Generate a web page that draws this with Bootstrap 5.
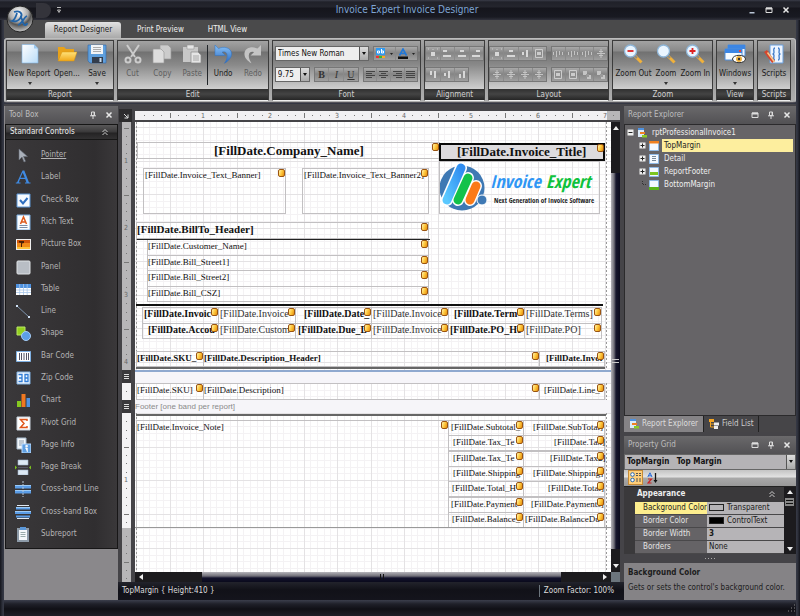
<!DOCTYPE html>
<html lang="en">
<head>
<meta charset="utf-8">
<meta name="viewport" content="width=device-width, initial-scale=1">
<title>Invoice Expert Invoice Designer</title>
<link href="https://cdn.jsdelivr.net/npm/bootstrap@5.3.0/dist/css/bootstrap.min.css" rel="stylesheet">
<style>
body{font-family:"DejaVu Sans Condensed","DejaVu Sans",sans-serif;font-size:8px;line-height:12px;background:#15151c;color:#ddd}
button,select,input{font:inherit;color:inherit}
button{border:0;background:none;padding:0}
svg{display:block;flex:none}
.i20{width:20px;height:20px}.i14{width:14px;height:14px}.i10{width:10px;height:10px}
.win{min-height:100vh;padding:0 4px;background:linear-gradient(90deg,#14151c,#343743 3px,#343743 calc(100% - 3px),#14151c)}
/* title bar */
.titlebar{height:20px;margin:0 -4px;padding:0 6px 0 36px;background:linear-gradient(#3a3c48 0,#202129 2px,#24252d 7px,#15151c 8px,#191a22 17px,#30313b)}
.titlebar h1{font-size:10px;line-height:20px;color:#7fa6d4;margin:0}
.orb{left:6px;top:5px;z-index:3}
.qat{width:15px;height:15px;border-radius:0 8px 8px 0;background:#34343b}
.wbtn{width:17px;height:16px}
/* ribbon */
.tabrow{height:18px;background:#4a4a4b;padding-left:41px;gap:16px}
.rtab{height:16px;color:#eee;line-height:16px}
.rtab.active{background:linear-gradient(#e2e2e2,#a9a9a9);color:#222;border-radius:3px 3px 0 0;width:76px}
.ribbon{height:65px;background:linear-gradient(#a5a5a5,#8a8a8a 20px,#b0b0b0);border:1px solid #bdbdbd;border-bottom-color:#55535a;border-radius:3px;padding:1px 4px 1px 1px;gap:3px}
.grp{border:1px solid #3c3c3c;border-bottom:1px solid #eee;min-width:0;color:#1b1b1b;background:linear-gradient(#a3a3a3,#898989 10px,#717171 11px,#8a8a8a 24px,#cfcfcf 48px)}
.gcap{height:11px;line-height:11px;color:#d0d0d0;text-align:center;background:linear-gradient(#303030,#444 5px,#262626)}
.g-report{flex:109 1 0}.g-edit{flex:155 1 0}.g-font{flex:152 1 0}.g-align{flex:61 1 0}.g-layout{flex:123 1 0}.g-zoom{flex:102 1 0}.g-view{flex:37 1 0}.g-script{flex:33 1 0}
.big{display:flex;flex-direction:column;align-items:center;white-space:nowrap;padding-top:3px}
.big span{line-height:13px;margin-top:3px}
.big .dd{width:4px;height:3px;margin-top:2px}
.dis{color:#5e5e5e}
.tools{padding:5px 2px 0 2px;gap:6px;display:flex;flex-direction:column}
.bset{display:flex;height:15px;border:1px solid #777;background:linear-gradient(#aaa,#858585 6px,#9f9f9f)}
.bset button{flex:1 1 0;display:flex;align-items:center;justify-content:center;border-left:1px solid #8a8a8a;min-width:0}
.bset button:first-child{border-left:0}
.w-color{width:45px}.w-biu{width:45px}.w-size{width:35px}
.combo{position:relative;height:15px;background:#eee;border:1px solid #666;color:#111}
.combo select{appearance:none;border:0;background:none;width:100%;height:13px;padding:0 2px;line-height:13px;outline:0;display:block}
.combo::before{content:"";position:absolute;right:0;top:0;bottom:0;width:9px;background:linear-gradient(#ddd,#aaa);border-left:1px solid #555}
.combo::after{content:"";position:absolute;right:2px;top:5px;border:2px solid transparent;border-top:3px solid #111}
.ftxt{font-family:"Liberation Serif",serif;font-size:10px;color:#333}
/* work area */
.work{background:#454448;padding:2px 0 0;margin-top:1px;min-height:0}
.minw{min-width:0}
.dhead{height:18px;padding:0 5px 0 4px;color:#bdbdbd;background:linear-gradient(#6a696b,#525154)}
.toolbox{width:114px;flex:none;background:#8a888b;padding-left:1px}
.tbcat{height:16px;padding:0 8px 0 4px;color:#eee;border:1px solid #161616;background:linear-gradient(#585758,#3a393a 7px,#242324 8px,#323132)}
.tblist{background:linear-gradient(90deg,#3a383a,#302e30 80%,#3a383a);border:1px solid #171617;border-top:0;padding:4px 0 3px 9px}
.tblist button{display:flex;align-items:center;flex:1 1 0;gap:10px;color:#b4b3b4;text-align:left}
.tblist svg{width:16px;height:16px}
.tbfoot{height:51px}
/* design surface */
.rulerrow{padding:0 4px 0 1px;margin-top:3px;gap:3px}
.corner{width:13px;height:13px;background:#2d2c2e}
.hruler{height:9px;background:#f1f0f2}
.hruler svg{width:100%;height:100%}
.vruler{width:9px;flex:none;background:#3a393c}
.vseg{position:relative;background:#f4f3f5;overflow:hidden}.vseg.grey{background:#b7b6b8}
.vgap{display:flex;align-items:center;justify-content:center}
.paper{color:#111;background:#fff;min-width:0}
.h-top{height:248px}.h-cap1{height:13px}.h-det{height:17px}.h-cap2{height:13px}.h-foot{height:115px}
.band{position:relative;background:#fff;overflow:hidden}
.band>svg,.vseg>svg{position:absolute;left:0;top:0;width:100%;height:100%}
.bcap{background:#f6f5f9;color:#8a8a8a;font-family:"Liberation Sans",sans-serif;line-height:13px}
.bcap.sel{border-top:2px solid #8fa9cf}
.fld{position:absolute;border:1px solid #c2c0c2;font:9px/12px "Liberation Serif",serif;white-space:nowrap}
.fld.b9{font-weight:700}
.fld.n10{font-size:10px;color:#333}
.fld.b10{font-size:10px;font-weight:700}
.fld.b11{font-size:11px;font-weight:700}
.fld.h13{font-size:13px;line-height:15px;font-weight:700}
.fld.ttl{border:2px solid #0a0a0a;background:#dddbde;line-height:14px}
.rule{position:absolute}
.db{position:absolute;width:7px;height:8px;border:1px solid #9b5410;border-radius:2px;background:linear-gradient(110deg,#fff3b0,#ffc83c 50%,#e38a10)}
.vscroll{width:9px;flex:none;background:#1c1b1e}
.vscroll .v1{height:39px}.vscroll .thumb{background:linear-gradient(90deg,#b5b4ba,#706f78 3px,#16162c 5px,#0a0a1c)}
.hscroll{height:10px;flex:none;background:#1c1b1e}
.hscroll .s1{width:55px}
.hscroll .thumb{background:linear-gradient(#b5b4ba,#706f78 4px,#12122c 6px,#0a0a1c)}
.vscroll .s2{height:11px}.hscroll .s2{width:38px}
.status{height:18px;background:linear-gradient(#22232c,#111118 8px,#14141c);color:#ddd;padding:0 10px 0 4px}
.botframe{height:16px;background:linear-gradient(#3b3e4c 0,#1f2029 4px,#101016 9px,#1d1e27)}
/* right side */
.rside{width:172px;flex:none;background:#454448}
.tree{background:#666467;border:1px solid #2b2a2c;padding:1px 2px;color:#eee;line-height:13px}
.tree ul{list-style:none;margin:0;padding:0 0 0 12px}
.tree .node{display:flex;align-items:center;height:13px;gap:3px}
.tree .node.on b{background:#fdee9e;color:#222}
.tree .node b{font-weight:400;flex:1;padding-left:2px}
.dtab{height:16px;padding:0 5px;display:flex;align-items:center;gap:3px;border-right:1px solid #222;color:#ccc}
.dtab.active{background:#858386;color:#ddd}
.dtabs{background:#464548}
.objsel{height:16px;background:#b5b3b6;font-weight:700}
.objsel select{font-weight:700}
.pbar{height:16px;background:linear-gradient(#c4c4c4,#e2e2e2 7px,#a9a9a9 8px,#989898)}
.pbar .on{background:#ffcf7a;border:1px solid #c58a36;height:15px;width:15px;justify-content:center}
.pgrid{background:#3a393b;border-top:1px solid #222}
.pgrid table{width:100%;table-layout:fixed;border-collapse:collapse}
.pgrid th,.pgrid td{height:13px;padding:0 2px;line-height:12px;border-bottom:1px solid #49484a;white-space:nowrap;overflow:hidden;font-weight:400}
.pgrid th{background:#656366;color:#e4e4e4;padding-left:8px;padding-right:0;width:72px}
.pgrid tr.on th{background:#fdee8e;color:#222}
.pgrid td{background:#b6b4b7;color:#1a1a1a}
.pgrid td i{display:inline-block;width:15px;height:7px;border:1px solid #222;margin-right:3px;vertical-align:-1px}
.pcat{height:15px;font-weight:700;color:#eee;padding:0 8px 0 2px}
.pleft{width:11px;flex:none}
.pscroll{width:12px;flex:none;background:#1c1b1e;padding:3px 0}
.pdesc{background:#858386;color:#1c1c1c;height:37px;padding:4px 4px}
.pdesc h2{font-size:8px;line-height:12px;font-weight:700;margin:0 0 3px}
</style>
<script src="https://cdn.jsdelivr.net/npm/bootstrap@5.3.0/dist/js/bootstrap.bundle.min.js"></script>
</head>
<body>
<svg width="0" height="0" class="position-absolute" aria-hidden="true">
<defs>
<linearGradient id="gPage" x1="0" y1="0" x2="1" y2="1"><stop offset="0" stop-color="#fff"/><stop offset="1" stop-color="#b9dcf8"/></linearGradient>
<linearGradient id="gBlue" x1="0" y1="0" x2="0" y2="1"><stop offset="0" stop-color="#8cc4f7"/><stop offset="1" stop-color="#2767c0"/></linearGradient>
<linearGradient id="gGold" x1="0" y1="0" x2="0" y2="1"><stop offset="0" stop-color="#ffe27a"/><stop offset="1" stop-color="#f0a81a"/></linearGradient>
<radialGradient id="gOrb" cx=".45" cy=".25" r=".8"><stop offset="0" stop-color="#fff"/><stop offset=".45" stop-color="#aaa"/><stop offset=".6" stop-color="#555"/><stop offset="1" stop-color="#ddd"/></radialGradient>
<linearGradient id="gSky" x1="1" y1="0" x2="0" y2="1"><stop offset="0" stop-color="#2f8cf0"/><stop offset="1" stop-color="#5ac8ff"/></linearGradient>
</defs>
<symbol id="pin" viewBox="0 0 8 8"><path d="M2.500 1h3v3.500h-3zM1 4.800h6M4 5v3" fill="none" stroke="#ddd"/><path d="M4.600 1h1v3.500h-1z" fill="#ddd"/></symbol>
<symbol id="xx" viewBox="0 0 8 8"><path d="M1.500 1.500l5 5M6.500 1.500l-5 5" stroke="#e8e8e8" stroke-width="1.500"/></symbol>
<symbol id="maxi" viewBox="0 0 8 8"><path d="M1 2h6v4.500H1z" fill="none" stroke="#ddd"/><path d="M1 1.500h6v2H1z" fill="#ddd"/></symbol>
<symbol id="mini" viewBox="0 0 8 8"><path d="M1.500 6h5v1.500h-5z" fill="#b9c4d4"/></symbol>
<symbol id="chev" viewBox="0 0 8 8"><path d="M1.500 4L4 1.500 6.500 4M1.500 7L4 4.500 6.500 7" fill="none" stroke="#ccc"/></symbol>
<symbol id="dd" viewBox="0 0 4 3"><path d="M0 0h4L2 3z" fill="#333"/></symbol>
<symbol id="plus" viewBox="0 0 7 7"><path d="M.5.5h6v6h-6z" fill="#eee"/><path d="M1.500 3.500h4M3.500 1.500v4" stroke="#222"/></symbol>
<symbol id="minus" viewBox="0 0 7 7"><path d="M.5.5h6v6h-6z" fill="#eee"/><path d="M1.500 3.500h4" stroke="#222"/></symbol>
<symbol id="new" viewBox="0 0 20 20"><path d="M2 .5h12l4 4V19H2z" fill="url(#gPage)" stroke="#7fb6e6" stroke-width=".6"/><path d="M14 .5v4h4z" fill="#9ccaf0"/></symbol>
<symbol id="open" viewBox="0 0 20 20"><path d="M1 3h6l2 2h8v3H6L1 16z" fill="#e8a21a"/><path d="M5 8h15l-3 9H1z" fill="url(#gGold)" stroke="#d89412" stroke-width=".5"/></symbol>
<symbol id="save" viewBox="0 0 20 20"><path d="M1 1h18v18H3l-2-2z" fill="#5f9fdc" stroke="#2f6aac" stroke-width=".6"/><path d="M4 1h12v9H4z" fill="#f2f4f6"/><path d="M6 3.500h8M6 5.500h8M6 7.500h8" stroke="#999" stroke-width=".8"/><path d="M5 13h11v6H5z" fill="#333d4c"/><path d="M12.500 14h2v4h-2z" fill="#cde"/></symbol>
<symbol id="cut" viewBox="0 0 20 20"><g fill="none" stroke="#ccc" stroke-width="2"><path d="M4 1l8 12M16 1L8 13"/><circle cx="5" cy="16" r="2.500"/><circle cx="15" cy="16" r="2.500"/></g></symbol>
<symbol id="copy" viewBox="0 0 20 20"><path d="M8 1h8l3 3v11H8z" fill="#ccc" stroke="#999" stroke-width=".7"/><path d="M1 5h8l3 3v11H1z" fill="#ddd" stroke="#999" stroke-width=".7"/></symbol>
<symbol id="paste" viewBox="0 0 20 20"><path d="M1 3h15v15H1z" fill="#c8c8c8"/><path d="M5 1h7v4H5z" fill="#e5e5e5" stroke="#999" stroke-width=".6"/><path d="M9 8h7l3 3v8H9z" fill="#e5e5e5" stroke="#888" stroke-width=".7"/><path d="M11 12h6M11 14h6M11 16h6" stroke="#999" stroke-width=".8"/></symbol>
<symbol id="undo" viewBox="0 0 20 20"><path d="M2 1v10.500h10.500L9 8.200c3-1 5 .3 5.200 3.300.2 2.500-.9 5-2.700 7.800C16.200 16.500 19 13 18.500 9 17.800 3.800 11 1.800 5.500 4.600z" fill="url(#gBlue)" stroke="#2e73c4" stroke-width=".5"/></symbol>
<symbol id="redo" viewBox="0 0 20 20"><path d="M18 1v10.500H7.500L11 8.200c-3-1-5 .3-5.200 3.300-.2 2.500.9 5 2.700 7.800C3.800 16.500 1 13 1.500 9 2.200 3.800 9 1.800 14.500 4.600z" fill="#c4c4c4"/></symbol>
<symbol id="zm" viewBox="0 0 20 20"><path d="M12 12l6.500 6.500" stroke="#f0b13c" stroke-width="3"/><path d="M11 11l3 3" stroke="#888" stroke-width="2"/><circle cx="7.500" cy="7" r="6" fill="#eaf5ff" stroke="#8fb6d8" stroke-width="1.300"/></symbol>
<symbol id="winds" viewBox="0 0 22 20"><path d="M4 1h17v11H4z" fill="#eef5ff" stroke="#4f8edb"/><path d="M4 1h17v4H4z" fill="#3c86e4"/><path d="M1 5h17v11H1z" fill="#f7fbff" stroke="#4f8edb"/><path d="M1 5h17v4H1z" fill="#3c86e4"/><path d="M15 6h2v2h-2z" fill="#e43"/><ellipse cx="15" cy="15" rx="6.500" ry="3.700" fill="#fff" stroke="#333"/><circle cx="15" cy="15" r="3" fill="#f0b13c"/><circle cx="15" cy="15" r="1.200" fill="#333"/></symbol>
<symbol id="script" viewBox="0 0 20 20"><path d="M6 1h13v18H6z" fill="#eef5ff" stroke="#6aa0dd"/><path d="M11 4c-2 0-1 3-1 4.500 0 1-.5 1.500-1.500 1.500 1 0 1.500.5 1.500 1.500 0 1.500-1 4.500 1 4.500M14 4c2 0 1 3 1 4.500 0 1 .5 1.500 1.500 1.500-1 0-1.500.5-1.500 1.500 0 1.500 1 4.500-1 4.500" fill="none" stroke="#3a78c8" stroke-width="1.300"/><path d="M1.500 7l8 11" stroke="#d8442c" stroke-width="3.500"/><path d="M3.500 8.500l7 9.500" stroke="#f6c98b" stroke-width="1.500"/></symbol>
<symbol id="t-ptr" viewBox="0 0 16 16"><path d="M4 2v11l3-3 2 5 1.500-.7-2-4.800h4z" fill="#aab0ba" stroke="#656b76" stroke-width=".6"/></symbol>
<symbol id="t-lbl" viewBox="0 0 16 16"><path d="M7.500 1.500h1.800L14 13.500h1.500v1H10v-1h1.500L10.200 10H5l-1.200 3.500H5.500v1H.8v-1H2zM5.500 8.800h4.300L7.700 3.800z" fill="#3f8ae2"/></symbol>
<symbol id="t-chk" viewBox="0 0 16 16"><path d="M2 2h13v13H2z" fill="#f6faff" stroke="#5d97d8"/><path d="M5 8l3 3.500L12.500 6" fill="none" stroke="#2e6ec0" stroke-width="2"/></symbol>
<symbol id="t-rich" viewBox="0 0 16 16"><path d="M2 1h13v15H2z" fill="#fbfdff" stroke="#7fb0e2"/><path d="M5.500 10L8.500 3l3 7M6.500 8h4" fill="none" stroke="#dd5a1d" stroke-width="1.500"/><path d="M4.500 11.500h8M4.500 13.500h8" stroke="#7a8ea8"/></symbol>
<symbol id="t-pic" viewBox="0 0 16 16"><path d="M1 3h15v11H1z" fill="#eee"/><path d="M2 4h13v9H2z" fill="#f08a18"/><path d="M2 4h13v3H2z" fill="#d0550a"/><path d="M4 5h5v2l-2 .5V11H6V7L4 6.500z" fill="#4a2006"/><path d="M2 11h13v2H2z" fill="#ffc23a"/></symbol>
<symbol id="t-pan" viewBox="0 0 16 16"><rect x="2" y="2" width="13" height="13" rx="1" fill="#b9bec5" stroke="#e0e3e6"/></symbol>
<symbol id="t-tab" viewBox="0 0 16 16"><path d="M1 3h15v11H1z" fill="#fff"/><path d="M1 3h15v4H1z" fill="#4f92e0"/><path d="M1 9h15M1 11.500h15M4.700 3v11M8.500 3v11M12.200 3v11" stroke="#a8c6ea" stroke-width=".8"/></symbol>
<symbol id="t-line" viewBox="0 0 16 16"><path d="M2 3l12 11" stroke="#7d93ad"/><path d="M1 2h2v2H1zM13 13h2v2h-2z" fill="#cfe2f7"/></symbol>
<symbol id="t-shp" viewBox="0 0 16 16"><path d="M2 2h8v8H2z" fill="#94d01e" stroke="#b9e864"/><circle cx="11" cy="11" r="4.500" fill="#5d9fe6" stroke="#a6cdf6"/></symbol>
<symbol id="t-bar" viewBox="0 0 16 16"><path d="M1.500 3.500h14v10h-14z" fill="#fff" stroke="#7fb0e2"/><path d="M4.500 5v7M6.500 5v7M9 5v7M11.500 5v7M13.500 5v7" stroke="#556"/></symbol>
<symbol id="t-zip" viewBox="0 0 16 16"><path d="M2 2h13v12H2z" fill="#f4f9ff" stroke="#7fb0e2"/><path d="M3.500 4.500H7v7H3.500M4 8h3M10 4.500h3v7h-3zM10 8h3" fill="none" stroke="#2f7cd6" stroke-width="1.300"/></symbol>
<symbol id="t-cht" viewBox="0 0 16 16"><path d="M2 9h4v6H2z" fill="#86c820"/><path d="M6.500 2h4v13h-4z" fill="#f07820"/><path d="M11.500 6H15v9h-3.500z" fill="#4f92e0"/></symbol>
<symbol id="t-piv" viewBox="0 0 16 16"><path d="M2 2h13v13H2z" fill="#fff" stroke="#ccd4de"/><path d="M12 6V4.500H5.500L9 8.500l-3.500 4H12V11" fill="none" stroke="#e0561c" stroke-width="1.500"/></symbol>
<symbol id="t-inf" viewBox="0 0 16 16"><path d="M2 1h9v11H2z" fill="#f4f7fb" stroke="#a8bccf"/><path d="M4 4h5M4 6h5M4 8h3" stroke="#89a"/><path d="M7 7h9v9H7z" fill="#5f9fe2" stroke="#bcdcff"/><path d="M10.800 8.500h1.600v1.300h-1.600zM10.300 11h2v4" fill="#fff" stroke="#fff" stroke-width=".8"/></symbol>
<symbol id="t-brk" viewBox="0 0 16 16"><path d="M3 1h10v5H3zM3 11h10v5H3z" fill="#dce8f4" stroke="#9db4ca" stroke-width=".6"/><path d="M3 8.500h10" stroke="#556"/><path d="M0 6.500l2 2-2 2zM16 6.500l-2 2 2 2z" fill="#7cc51c"/></symbol>
<symbol id="t-xl" viewBox="0 0 16 16"><path d="M0 4h16v3.500H0zM0 9h16v3.500H0z" fill="#5a9ce6"/><path d="M0 4h16v1H0zM0 9h16v1H0z" fill="#9ccaf6"/><path d="M8 0v16" stroke="#b9c9da" stroke-dasharray="2 1"/></symbol>
<symbol id="t-xb" viewBox="0 0 16 16"><path d="M2 1.500h12M2 14.500h12" stroke="#dfe8f2"/><path d="M1 3h14v2.500H1zM0 7h16v3H0zM1 11.500h14v2H1z" fill="#5a9ce6"/><path d="M0 7h16v1H0zM1 3h14v1H1z" fill="#9ccaf6"/></symbol>
<symbol id="t-sub" viewBox="0 0 16 16"><path d="M2 2h12v14H2z" fill="#8d9aa8"/><path d="M4 4h8v10H4z" fill="#f4f7fa"/><path d="M5 1h6v3H5z" fill="#5b98da"/><path d="M5.500 6.500h5M5.500 8.500h5M5.500 10.500h5" stroke="#9aa"/></symbol>
<symbol id="lr" viewBox="0 0 12 11"><path d="M4 4h4v4H4z" fill="#d8d8d8"/><path d="M1 1h1M10 1h1M1 10h1M10 10h1M6 1v1" stroke="#ccc"/></symbol>
<symbol id="a1" viewBox="0 0 12 11"><path d="M2 2h4v2H2zM2 7h8v2H2z" fill="#d8d8d8"/></symbol>
<symbol id="a2" viewBox="0 0 12 11"><path d="M4 2h4v2H4zM2 7h8v2H2z" fill="#d8d8d8"/></symbol>
<symbol id="a3" viewBox="0 0 12 11"><path d="M6 2h4v2H6zM2 7h8v2H2z" fill="#d8d8d8"/></symbol>
<symbol id="v1" viewBox="0 0 12 11"><path d="M3 2h2v4H3zM7 2h2v7H7z" fill="#d8d8d8"/></symbol>
<symbol id="v2" viewBox="0 0 12 11"><path d="M3 4h2v3H3zM7 2h2v7H7z" fill="#d8d8d8"/></symbol>
<symbol id="v3" viewBox="0 0 12 11"><path d="M3 5h2v4H3zM7 2h2v7H7z" fill="#d8d8d8"/></symbol>
<symbol id="l1" viewBox="0 0 12 11"><path d="M1.500 4v3M4.500 3v6M7.500 3v4M10.500 4v3" stroke="#c4c4c4"/></symbol>
<symbol id="l2" viewBox="0 0 12 11"><path d="M2 5.500h8M6 1v9" stroke="#c4c4c4"/><path d="M4 3h4v1H4zM4 7h4v1H4z" fill="#c4c4c4"/></symbol>
<symbol id="l3" viewBox="0 0 12 11"><path d="M2.500 1.500h7v8h-7z" fill="none" stroke="#ccc"/><path d="M4 4h4v3H4z" fill="#ccc"/></symbol>
<symbol id="l4" viewBox="0 0 12 11"><path d="M2 2h4v4H2zM6 6h4v4H6z" fill="#c4c4c4"/><path d="M5 5h3v3H5z" fill="#999"/></symbol>
<symbol id="jl" viewBox="0 0 11 10"><path d="M1 1.500h9M1 3.500h6M1 5.500h9M1 7.500h6" stroke="#444"/></symbol>
<symbol id="jc" viewBox="0 0 11 10"><path d="M1 1.500h9M3 3.500h5M1 5.500h9M3 7.500h5" stroke="#444"/></symbol>
<symbol id="jr" viewBox="0 0 11 10"><path d="M1 1.500h9M4 3.500h6M1 5.500h9M4 7.500h6" stroke="#444"/></symbol>
<symbol id="jj" viewBox="0 0 11 10"><path d="M1 1.500h9M1 3.500h9M1 5.500h9M1 7.500h9" stroke="#444"/></symbol>
<symbol id="r-root" viewBox="0 0 10 10"><path d="M1 0h6v9H1z" fill="#dceaf8"/><path d="M1 0h6v2H1z" fill="#4f92e0"/><path d="M3 4h5v2H3z" fill="#f08020"/><path d="M5 7h5v2.500H5z" fill="#8ccc24"/></symbol>
<symbol id="r-top" viewBox="0 0 10 10"><path d="M.5.5h9v9h-9z" fill="#f4f9ff" stroke="#8fb9e6"/><path d="M0 0h10v2.500H0z" fill="#f08020"/></symbol>
<symbol id="r-det" viewBox="0 0 10 10"><path d="M.5.5h9v9h-9z" fill="#f4f9ff" stroke="#8fb9e6"/><path d="M3 2.500h4M3 4.500h4M3 6.500h4" stroke="#789"/></symbol>
<symbol id="r-ft" viewBox="0 0 10 10"><path d="M.5.5h9v9h-9z" fill="#f4f9ff" stroke="#8fb9e6"/><path d="M1 5h8v3H1z" fill="#7cc520"/></symbol>
<symbol id="r-bot" viewBox="0 0 10 10"><path d="M.5.5h9v9h-9z" fill="#f4f9ff" stroke="#8fb9e6"/><path d="M0 7h10v3H0z" fill="#5bb41a"/></symbol>
<symbol id="r-fl" viewBox="0 0 10 10"><path d="M0 0h5v3H0z" fill="#f5a623"/><path d="M1.500 3v5H5M1.500 5H5" fill="none" stroke="#f5a623"/><path d="M5 3.500h5v3H5zM5 7h4v3H5z" fill="#eee"/></symbol>
<symbol id="band" viewBox="0 0 5 6"><path d="M0 .5h5M0 2.500h5M0 4.500h5" stroke="#ddd"/></symbol>
</svg>

<div class="win d-flex flex-column position-relative">
  <header class="titlebar d-flex align-items-center">
    <span class="qat"></span>
    <svg class="ms-1" width="8" height="8" viewBox="0 0 8 8"><path d="M2 1.500h4M2.500 4h3L4 6.500z" stroke="#bbb" fill="none"/></svg>
    <h1 class="flex-fill text-center fw-normal ps-2">Invoice Expert Invoice Designer</h1>
    <button class="wbtn d-flex justify-content-center align-items-center" aria-label="Minimize"><svg width="8" height="8"><use href="#mini"/></svg></button>
    <button class="wbtn d-flex justify-content-center align-items-center" aria-label="Maximize"><svg width="8" height="8"><use href="#maxi"/></svg></button>
    <button class="wbtn d-flex justify-content-center align-items-center" aria-label="Close"><svg width="8" height="8"><use href="#xx"/></svg></button>
  </header>
  <button class="orb position-absolute" aria-label="Application menu"><svg width="28" height="28" viewBox="0 0 28 28"><circle cx="14" cy="14" r="13" fill="url(#gOrb)" stroke="#222"/><path d="M8 7c5-2 9 1 7 5s-6 5-9 4c3-1 4-5 5-8M14 12c3 0 2 8 5 8 1 0 2-1 2-2M21 11c-3 1-5 8-9 9" fill="none" stroke="#2264a8" stroke-width="1.800"/></svg></button>

  <nav class="tabrow d-flex align-items-end">
    <button class="rtab active">Report Designer</button>
    <button class="rtab">Print Preview</button>
    <button class="rtab ms-2">HTML View</button>
  </nav>

  <section class="ribbon d-flex">
    <div class="grp g-report d-flex flex-column"><div class="d-flex flex-fill justify-content-around">
      <button class="big"><svg class="i20"><use href="#new"/></svg><span>New Report</span><svg class="dd"><use href="#dd"/></svg></button>
      <button class="big"><svg class="i20"><use href="#open"/></svg><span>Open...</span></button>
      <button class="big px-1"><svg class="i20"><use href="#save"/></svg><span>Save</span><svg class="dd"><use href="#dd"/></svg></button>
    </div><div class="gcap">Report</div></div>
    <div class="grp g-edit d-flex flex-column"><div class="d-flex flex-fill">
      <button class="big dis flex-fill w-25"><svg class="i20"><use href="#cut"/></svg><span>Cut</span></button>
      <button class="big dis flex-fill w-25"><svg class="i20"><use href="#copy"/></svg><span>Copy</span></button>
      <button class="big dis flex-fill w-25"><svg class="i20"><use href="#paste"/></svg><span>Paste</span></button>
      <div class="border-start border-dark my-1"></div>
      <button class="big flex-fill w-25"><svg class="i20"><use href="#undo"/></svg><span>Undo</span></button>
      <button class="big dis flex-fill w-25"><svg class="i20"><use href="#redo"/></svg><span>Redo</span></button>
    </div><div class="gcap">Edit</div></div>
    <div class="grp g-font d-flex flex-column"><div class="tools flex-fill">
      <div class="d-flex gap-1">
        <div class="combo flex-fill"><select aria-label="Font name"><option>Times New Roman</option></select></div>
        <div class="bset w-color">
          <button aria-label="Highlight"><svg width="18" height="11" viewBox="0 0 18 11"><path d="M0 0h9v7H0z" fill="#2f9af2"/><path d="M1.500 5V3h2v2zM5.500 1v4h2V3h-2" fill="none" stroke="#fff"/><path d="M0 8h3v2H0z" fill="#e33"/><path d="M3 8h3v2H3z" fill="#3b3"/><path d="M6 8h3v2H6z" fill="#fa2"/><path d="M14 5h3l-1.500 2z" fill="#222"/></svg></button>
          <button aria-label="Font colour"><svg width="18" height="11" viewBox="0 0 18 11"><path d="M1.500 7.500L5 1l3.500 6.500M3 5.500h4" fill="none" stroke="#2178d8" stroke-width="1.600"/><path d="M0 8.500h10V11H0z" fill="#111"/><path d="M14 5h3l-1.500 2z" fill="#222"/></svg></button>
        </div>
      </div>
      <div class="d-flex gap-1">
        <div class="combo w-size"><select aria-label="Font size"><option>9.75</option></select></div>
        <div class="bset ftxt w-biu"><button><b>B</b></button><button><i>I</i></button><button><u>U</u></button></div>
        <div class="bset flex-fill"><button aria-label="Left"><svg width="11" height="10"><use href="#jl"/></svg></button><button aria-label="Centre"><svg width="11" height="10"><use href="#jc"/></svg></button><button aria-label="Right"><svg width="11" height="10"><use href="#jr"/></svg></button><button aria-label="Justify"><svg width="11" height="10"><use href="#jj"/></svg></button></div>
      </div>
    </div><div class="gcap">Font</div></div>
    <div class="grp g-align d-flex flex-column"><div class="tools flex-fill px-0">
      <div class="bset"><button aria-label="Align to grid"><svg width="12" height="11"><use href="#lr"/></svg></button><button aria-label="Align lefts"><svg width="12" height="11"><use href="#a1"/></svg></button><button aria-label="Align centres"><svg width="12" height="11"><use href="#a2"/></svg></button><button aria-label="Align rights"><svg width="12" height="11"><use href="#a3"/></svg></button></div>
      <div class="bset w-75"><button aria-label="Align tops"><svg width="12" height="11"><use href="#v1"/></svg></button><button aria-label="Align middles"><svg width="12" height="11"><use href="#v2"/></svg></button><button aria-label="Align bottoms"><svg width="12" height="11"><use href="#v3"/></svg></button></div>
    </div><div class="gcap">Alignment</div></div>
    <div class="grp g-layout d-flex flex-column"><div class="tools flex-fill px-0">
      <div class="d-flex gap-1"><div class="bset flex-fill"><button aria-label="Size to grid"><svg width="12" height="11"><use href="#lr"/></svg></button><button aria-label="Same width"><svg width="12" height="11"><use href="#a2"/></svg></button><button aria-label="Same height"><svg width="12" height="11"><use href="#v2"/></svg></button><button aria-label="Same size"><svg width="12" height="11"><use href="#l3"/></svg></button></div>
      <div class="bset flex-fill"><button aria-label="Equal horizontal spacing"><svg width="12" height="11"><use href="#l1"/></svg></button><button aria-label="Increase horizontal spacing"><svg width="12" height="11"><use href="#l1"/></svg></button><button aria-label="Decrease horizontal spacing"><svg width="12" height="11"><use href="#l1"/></svg></button><button aria-label="Remove horizontal spacing"><svg width="12" height="11"><use href="#l2"/></svg></button></div></div>
      <div class="d-flex gap-1"><div class="bset flex-fill"><button aria-label="Equal vertical spacing"><svg width="12" height="11"><use href="#l2"/></svg></button><button aria-label="Increase vertical spacing"><svg width="12" height="11"><use href="#l2"/></svg></button><button aria-label="Decrease vertical spacing"><svg width="12" height="11"><use href="#l2"/></svg></button><button aria-label="Remove vertical spacing"><svg width="12" height="11"><use href="#l2"/></svg></button></div>
      <div class="bset flex-fill"><button aria-label="Centre horizontally"><svg width="12" height="11"><use href="#l3"/></svg></button><button aria-label="Centre vertically"><svg width="12" height="11"><use href="#l3"/></svg></button><button aria-label="Bring to front"><svg width="12" height="11"><use href="#l4"/></svg></button><button aria-label="Send to back"><svg width="12" height="11"><use href="#l4"/></svg></button></div></div>
    </div><div class="gcap">Layout</div></div>
    <div class="grp g-zoom d-flex flex-column"><div class="d-flex flex-fill justify-content-around">
      <button class="big"><svg class="i20" viewBox="0 0 20 20"><use href="#zm"/><path d="M4.500 7h6" stroke="#d22" stroke-width="1.800"/></svg><span>Zoom Out</span></button>
      <button class="big"><svg class="i20"><use href="#zm"/></svg><span>Zoom</span><svg class="dd"><use href="#dd"/></svg></button>
      <button class="big"><svg class="i20" viewBox="0 0 20 20"><use href="#zm"/><path d="M4.500 7h6M7.500 4v6" stroke="#d22" stroke-width="1.800"/></svg><span>Zoom In</span></button>
    </div><div class="gcap">Zoom</div></div>
    <div class="grp g-view d-flex flex-column"><button class="big flex-fill"><svg width="22" height="20"><use href="#winds"/></svg><span>Windows</span><svg class="dd"><use href="#dd"/></svg></button><div class="gcap">View</div></div>
    <div class="grp g-script d-flex flex-column"><button class="big flex-fill"><svg class="i20"><use href="#script"/></svg><span>Scripts</span></button><div class="gcap">Scripts</div></div>
  </section>

  <main class="work d-flex flex-fill">
    <aside class="toolbox d-flex flex-column">
      <div class="dhead d-flex align-items-center gap-2"><span class="flex-fill">Tool Box</span><svg width="8" height="8"><use href="#pin"/></svg><svg width="8" height="8"><use href="#xx"/></svg></div>
      <div class="tbcat d-flex align-items-center"><span class="flex-fill">Standard Controls</span><svg width="8" height="8"><use href="#chev"/></svg></div>
      <div class="tblist d-flex flex-column flex-fill">
        <button><svg><use href="#t-ptr"/></svg><u>Pointer</u></button>
        <button><svg><use href="#t-lbl"/></svg>Label</button>
        <button><svg><use href="#t-chk"/></svg>Check Box</button>
        <button><svg><use href="#t-rich"/></svg>Rich Text</button>
        <button><svg><use href="#t-pic"/></svg>Picture Box</button>
        <button><svg><use href="#t-pan"/></svg>Panel</button>
        <button><svg><use href="#t-tab"/></svg>Table</button>
        <button><svg><use href="#t-line"/></svg>Line</button>
        <button><svg><use href="#t-shp"/></svg>Shape</button>
        <button><svg><use href="#t-bar"/></svg>Bar Code</button>
        <button><svg><use href="#t-zip"/></svg>Zip Code</button>
        <button><svg><use href="#t-cht"/></svg>Chart</button>
        <button><svg><use href="#t-piv"/></svg>Pivot Grid</button>
        <button><svg><use href="#t-inf"/></svg>Page Info</button>
        <button><svg><use href="#t-brk"/></svg>Page Break</button>
        <button><svg><use href="#t-xl"/></svg>Cross-band Line</button>
        <button><svg><use href="#t-xb"/></svg>Cross-band Box</button>
        <button><svg><use href="#t-sub"/></svg>Subreport</button>
      </div>
      <div class="tbfoot"></div>
    </aside>

    <section class="d-flex flex-column flex-fill minw">
      <div class="rulerrow d-flex align-items-center">
        <button class="corner d-flex align-items-center justify-content-center" aria-label="Select report"><svg width="6" height="6" viewBox="0 0 6 6"><path d="M1 1l4 4M5 1.500V5H1.500" stroke="#ddd" fill="none"/></svg></button>
        <div class="hruler flex-fill" id="hruler"></div>
      </div>
      <div class="d-flex flex-fill ps-1 pe-1">
        <div class="vruler d-flex flex-column me-1">
          <div class="vseg grey h-top" data-zero="-28"></div>
          <div class="vgap h-cap1"><svg width="5" height="6"><use href="#band"/></svg></div>
          <div class="vseg h-det" data-zero="0"></div>
          <div class="vgap h-cap2"><svg width="5" height="6"><use href="#band"/></svg></div>
          <div class="vseg h-foot" data-zero="0"></div>
          <div class="vseg grey flex-fill" data-zero="0"></div>
        </div>
        <div class="d-flex flex-column flex-fill minw">
          <div class="paper d-flex flex-column flex-fill">
            <div class="band h-top" data-band="top" data-zero="5"></div>
            <div class="bcap sel h-cap1"></div>
            <div class="band h-det" data-band="detail" data-zero="0"></div>
            <div class="bcap h-cap2">Footer [one band per report]</div>
            <div class="band h-foot" data-band="footer" data-zero="0"></div>
            <div class="band flex-fill" data-band="rest" data-zero="20"></div>
          </div>
          <div class="hscroll d-flex align-items-center">
            <svg class="mx-1" width="4" height="6" viewBox="0 0 4 6"><path d="M4 0v6L0 3z" fill="#eee"/></svg>
            <div class="s1"></div>
            <div class="thumb flex-fill h-100 d-flex justify-content-center align-items-center"><svg width="4" height="6" viewBox="0 0 4 6"><path d="M.5 0v6M3.500 0v6" stroke="#111"/></svg></div>
            <div class="s2"></div>
            <svg class="mx-1" width="4" height="6" viewBox="0 0 4 6"><path d="M0 0v6l4-3z" fill="#eee"/></svg>
          </div>
        </div>
        <div class="vscroll d-flex flex-column align-items-center">
          <svg class="my-1" width="6" height="4" viewBox="0 0 6 4"><path d="M0 4h6L3 0z" fill="#eee"/></svg>
          <div class="v1"></div>
          <div class="thumb flex-fill w-100 d-flex justify-content-center align-items-center"><svg width="7" height="4" viewBox="0 0 7 4"><path d="M0 .5h7M0 3.500h7" stroke="#ccc"/></svg></div>
          <div class="s2"></div>
          <svg class="my-1" width="6" height="4" viewBox="0 0 6 4"><path d="M0 0h6L3 4z" fill="#eee"/></svg>
          <div class="hscroll w-100 bg-secondary"></div>
        </div>
      </div>
      <footer class="status d-flex align-items-center justify-content-between"><span>TopMargin { Height:410 }</span><span class="border-start border-secondary ps-1">Zoom Factor: 100%</span></footer>
    </section>

    <aside class="rside d-flex flex-column">
      <div class="dhead d-flex align-items-center gap-2"><span class="flex-fill">Report Explorer</span><svg width="8" height="8"><use href="#maxi"/></svg><svg width="8" height="8"><use href="#pin"/></svg><svg width="8" height="8"><use href="#xx"/></svg></div>
      <div class="tree flex-fill">
        <div class="node"><svg width="7" height="7"><use href="#minus"/></svg><svg class="i10"><use href="#r-root"/></svg><b>rptProfessionalInvoice1</b></div>
        <ul>
          <li class="node on"><svg width="7" height="7"><use href="#plus"/></svg><svg class="i10"><use href="#r-top"/></svg><b>TopMargin</b></li>
          <li class="node"><svg width="7" height="7"><use href="#plus"/></svg><svg class="i10"><use href="#r-det"/></svg><b>Detail</b></li>
          <li class="node"><svg width="7" height="7"><use href="#plus"/></svg><svg class="i10"><use href="#r-ft"/></svg><b>ReportFooter</b></li>
          <li class="node"><svg width="7" height="7" viewBox="0 0 7 7"><path d="M3.500 0v3.500H7" fill="none" stroke="#333" stroke-dasharray="1 1"/></svg><svg class="i10"><use href="#r-bot"/></svg><b>BottomMargin</b></li>
        </ul>
      </div>
      <div class="dtabs d-flex"><button class="dtab active"><svg class="i10"><use href="#r-root"/></svg>Report Explorer</button><button class="dtab"><svg class="i10"><use href="#r-fl"/></svg>Field List</button></div>
      <div class="dhead d-flex align-items-center gap-2 mt-1"><span class="flex-fill">Property Grid</span><svg width="8" height="8"><use href="#maxi"/></svg><svg width="8" height="8"><use href="#pin"/></svg><svg width="8" height="8"><use href="#xx"/></svg></div>
      <div class="combo objsel"><select aria-label="Selected object"><option>TopMargin&nbsp;&nbsp; Top Margin</option></select></div>
      <div class="pbar d-flex align-items-center gap-1 ps-1">
        <button class="on d-flex align-items-center" aria-label="Categorized"><svg width="11" height="11" viewBox="0 0 11 11"><circle cx="2.500" cy="2.500" r="1.800" fill="#fff" stroke="#2468b4"/><circle cx="2.500" cy="8" r="1.800" fill="#fff" stroke="#2468b4"/><path d="M6 1.500h2M6 3.500h2M9 1.500h2M9 3.500h2M6 7h2M6 9h2M9 7h2M9 9h2" stroke="#555"/></svg></button>
        <button class="d-flex" aria-label="Alphabetical"><svg width="11" height="12" viewBox="0 0 11 12"><path d="M.8 5L3 .8 5 5M1.500 3.800h3" fill="none" stroke="#2468d8"/><path d="M1 7h3.500L1 11h3.500" fill="none" stroke="#c22" stroke-width="1.200"/><path d="M8.500 1v8" stroke="#111" stroke-width="1.300"/><path d="M6.500 8h4l-2 3z" fill="#111"/></svg></button>
      </div>
      <div class="pgrid d-flex">
        <div class="pleft"></div>
        <div class="flex-fill minw">
          <div class="pcat d-flex align-items-center justify-content-between"><span>Appearance</span><svg width="8" height="8"><use href="#chev"/></svg></div>
          <table>
            <tr class="on"><th>Background Color</th><td><i></i>Transparent</td></tr>
            <tr><th>Border Color</th><td><i class="bg-black"></i>ControlText</td></tr>
            <tr><th>Border Width</th><td class="fw-bold">3</td></tr>
            <tr><th>Borders</th><td>None</td></tr>
          </table>
        </div>
        <div class="pscroll d-flex flex-column align-items-center">
          <svg width="6" height="4" viewBox="0 0 6 4"><path d="M0 4h6L3 0z" fill="#eee"/></svg>
          <svg class="mt-1" width="9" height="8" viewBox="0 0 9 8"><path d="M0 0h9v8H0z" fill="#888"/><path d="M1 2.500h7M1 5.500h7" stroke="#111"/></svg>
          <svg class="mt-auto" width="6" height="4" viewBox="0 0 6 4"><path d="M0 0h6L3 4z" fill="#eee"/></svg>
        </div>
      </div>
      <div class="d-flex justify-content-center py-1"><svg width="11" height="1"><path d="M0 .5h11" stroke="#aaa" stroke-dasharray="1 2"/></svg></div>
      <div class="pdesc"><h2>Background Color</h2>Gets or sets the control's background color.</div>
    </aside>
  </main>
  <div class="botframe d-flex justify-content-end align-items-center"><svg width="8" height="8" viewBox="0 0 8 8"><path d="M6 1h1M3 4h1M6 4h1M0 7h1M3 7h1M6 7h1" stroke="#888"/></svg></div>
</div>

<script>
// Designer surface: one report inch is 67 pixels wide.
const INCH = 67;
// x, y, width, height, style, text, text inset, data-bound marker
const fields = {
  top: [
    [2,20,303,17,'h13','[FillDate.Company_Name]',76,1],
    [304,21,166,18,'h13 ttl','[FillDate.Invoice_Title]',16,1],
    [8,46,143,46,'','[FillDate.Invoice_Text_Banner]',1,1],
    [167,46,127,46,'','[FillDate.Invoice_Text_Banner2]',1,1],
    [304,39,161,53,'logo','',0,0],
    [1,100,293,17,'b11','[FillDate.BillTo_Header]',0,1],
    [12,117,282,17,'','[FillDate.Customer_Name]',0,1],
    [12,133,282,16,'','[FillDate.Bill_Street1]',0,1],
    [12,148,282,17,'','[FillDate.Bill_Street2]',0,1],
    [12,164,282,16,'','[FillDate.Bill_CSZ]',0,1],
    [7,185,77,17,'b10','[FillDate.Invoic',1,1],
    [83,185,78,17,'n10','[FillDate.Invoice',1,1],
    [160,185,77,17,'b10','[FillDate.Date_',8,1],
    [236,185,78,17,'n10','[FillDate.Invoice',1,1],
    [313,185,77,17,'b10','[FillDate.Term',5,1],
    [389,185,78,17,'n10','[FillDate.Terms]',1,1],
    [7,201,77,16,'b10','[FillDate.Accou',5,1],
    [83,201,78,16,'n10','[FillDate.Custom',1,1],
    [160,201,77,16,'b10','[FillDate.Due_D',2,1],
    [236,201,78,16,'n10','[FillDate.Invoice',1,1],
    [313,201,77,16,'b10','[FillDate.PO_He',1,1],
    [389,201,78,16,'n10','[FillDate.PO]',1,1],
    [1,229,68,16,'b9','[FillDate.SKU_',0,1],
    [68,229,337,16,'b9','[FillDate.Description_Header]',0,1],
    [404,229,66,16,'b9','[FillDate.Invoi',6,1]
  ],
  detail: [
    [1,0,68,17,'','[FillDate.SKU]',0,1],
    [68,0,337,17,'','[FillDate.Description]',0,1],
    [404,0,66,17,'','[FillDate.Line_',4,1]
  ],
  footer: [
    [1,7,313,108,'','[FillDate.Invoice_Note]',0,1]
  ],
  rest: []
};
const totals = [
  ['[FillDate.Subtotal_',2,'[FillDate.SubTotal]',9],
  ['[FillDate.Tax_Te',4,'[FillDate.Tax]',30],
  ['[FillDate.Tax_Te',4,'[FillDate.Tax2]',26],
  ['[FillDate.Shipping',4,'[FillDate.Shipping]',9],
  ['[FillDate.Total_H',3,'[FillDate.Total]',24],
  ['[FillDate.Payment',2,'[FillDate.Payments]',7],
  ['[FillDate.Balance_',3,'[FillDate.BalanceDu',1]
];
const tops = [7, 22, 38, 53, 68, 84, 99];
totals.forEach((t, i) => {
  fields.footer.push([313, tops[i], 76, 16, '', t[0], t[1], 1]);
  fields.footer.push([388, tops[i], 82, 16, '', t[2], t[3], 1]);
});
const rules = {
  top: [[2,117,293,1,'#222'],[1,182,467,2,'#111'],[1,245,469,2,'#666']],
  detail: [],
  footer: [[1,1,470,2,'#666'],[0,114,476,1,'#999']],
  rest: []
};
const box = (el, x, y, w, h) => Object.assign(el.style, {left:x+'px', top:y+'px', width:w+'px', height:h+'px'});
document.querySelectorAll('[data-band]').forEach(b => {
  const name = b.dataset.band, z = +b.dataset.zero;
  let minor = '', major = '';
  [7,13,20,27,40,47,54,60].forEach(n => { minor += `M${n}.5 0v67M0 ${n}.5h67`; });
  [0,34].forEach(n => { major += `M${n}.5 0v67M0 ${n}.5h67`; });
  b.innerHTML = `<svg><defs><pattern id="p-${name}" x="1" y="${z}" width="67" height="67" patternUnits="userSpaceOnUse"><path d="${minor}" stroke="#f4f2f4"/><path d="${major}" stroke="#e4e2e4"/></pattern></defs><rect width="100%" height="100%" fill="url(#p-${name})"/><path d="M1.500 0v400M471.500 0v400" stroke="#999" stroke-dasharray="2 2"/></svg>`;
  fields[name].forEach(([x,y,w,h,cls,text,inset,mark]) => {
    const d = document.createElement('div');
    d.className = 'fld ' + cls; box(d, x, y, w, h);
    d.style.paddingLeft = inset + 'px'; d.textContent = text; b.append(d);
    if (mark) {
      const m = document.createElement('span');
      m.className = 'db'; m.style.left = (x + w - 8) + 'px'; m.style.top = (y + 1) + 'px'; b.append(m);
    }
  });
  rules[name].forEach(([x,y,w,h,c]) => {
    const d = document.createElement('div'); d.className = 'rule'; box(d, x, y, w, h); d.style.background = c; b.append(d);
  });
});
// Company logo inside its picture box
document.querySelector('.logo').innerHTML = `<svg width="158" height="51" viewBox="0 0 158 51">
<circle cx="22" cy="26" r="22.500" fill="#3f79b4"/><g stroke-linecap="round"><g stroke="#fff" stroke-width="12"><path d="M21 6L7 38"/><path d="M28 16L18 38"/><path d="M36 24l-6 14"/></g><path d="M21 6L7 38" stroke="url(#gSky)" stroke-width="9"/><path d="M28 16L18 38" stroke="#12c24a" stroke-width="9"/><path d="M36 24l-6 14" stroke="#fb7a18" stroke-width="9"/></g><circle cx="42" cy="38" r="5" fill="#3f79b4" stroke="#fff"/>
<g font-family="Open Sans Condensed, Open Sans, sans-serif"><text y="26" font-size="18" font-style="italic" font-weight="700"><tspan x="50" fill="#2f96f4">Invoice</tspan><tspan x="106" fill="#10c23c">Expert</tspan></text>
<text x="54" y="41" font-size="7" fill="#222">Next Generation of Invoice Software</text></g></svg>`;
// Rulers: a dot each eighth, a tick each half, a number each inch
let hr = '';
for (let i = 1; i < 60 && i * INCH / 8 < 480; i++) {
  const x = Math.round(i * INCH / 8) + 1;
  if (i % 8 === 0) hr += `<text x="${x}" y="7" text-anchor="middle">${i / 8}</text>`;
  else if (i % 4 === 0) hr += `<path d="M${x}.5 2v5" stroke="#777"/>`;
  else hr += `<path d="M${x} 4.500h1" stroke="#777"/>`;
}
document.getElementById('hruler').innerHTML = `<svg font-size="7" fill="#666"><rect x="472" width="100%" height="9" fill="#b7b6b8"/>${hr}</svg>`;
document.querySelectorAll('.vseg').forEach(s => {
  let t = ''; const z = +s.dataset.zero, h = s.clientHeight;
  for (let i = 1; i < 40; i++) {
    const y = Math.round(i * INCH / 8) + z;
    if (y < 3 || y > h - 4) continue;
    if (i % 8 === 0) t += `<text x="4" y="${y + 2}" text-anchor="middle">${i / 8}</text>`;
    else if (i % 4 === 0) t += `<path d="M2 ${y}.5h5" stroke="#777"/>`;
    else t += `<path d="M4 ${y}.5h1" stroke="#777"/>`;
  }
  s.innerHTML = `<svg font-size="7" fill="#666">${t}</svg>`;
});
</script>
</body>
</html>
